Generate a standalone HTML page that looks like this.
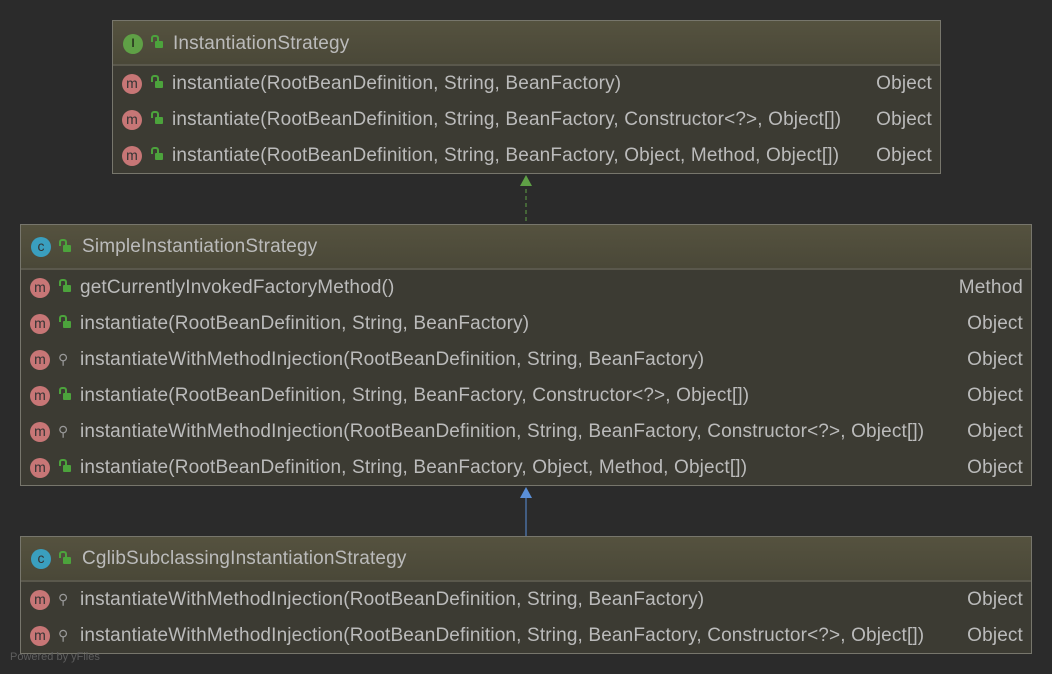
<!DOCTYPE html>
<html><head><style>
body{margin:0;width:1052px;height:674px;background:#2b2b2b;font-family:"Liberation Sans",sans-serif;position:relative;overflow:hidden}
.box{position:absolute;border:1px solid #77766c;background:#3c3b33}
.hd{position:absolute;left:0;right:0;top:0;height:43px;background:linear-gradient(#55523f,#4a4838);border-bottom:2px solid #5a584c}
.t{position:absolute;color:#bbbbbb;font-size:19px;letter-spacing:0.15px;white-space:nowrap;line-height:22px;margin-top:0px}
.r{position:absolute;color:#bbbbbb;font-size:19px;letter-spacing:0.15px;right:8px;line-height:22px}
.ic{position:absolute;width:20px;height:20px;border-radius:50%;font-size:14px;text-align:center;line-height:19px;color:#333}
.m{background:#c77676}
.c{background:#3a9fbf}
.i{background:#5fa046;color:#2b3a20;font-weight:bold;font-size:12px}
.lk{position:absolute;width:8px;height:7px;background:#4ca33c;border-radius:1px}
.lk:before{content:"";position:absolute;left:-4px;top:-6px;width:4px;height:5px;border:2px solid #4ca33c;border-bottom:none;border-radius:3px 3px 0 0}
.key{position:absolute;color:#999;font-size:14px}
</style></head><body>

<div class="box" style="left:112px;top:20px;width:827px;height:152px">
 <div class="hd"></div>
 <div class="ic i" style="left:10px;top:13px">I</div><div class="lk" style="left:42px;top:20px"></div>
 <div class="t" style="left:60px;top:12px">InstantiationStrategy</div>
 <div class="ic m" style="left:9px;top:53px">m</div><div class="lk" style="left:42px;top:60px"></div>
 <div class="t" style="left:59px;top:52px">instantiate(RootBeanDefinition, String, BeanFactory)</div><div class="r" style="top:52px">Object</div>
 <div class="ic m" style="left:9px;top:89px">m</div><div class="lk" style="left:42px;top:96px"></div>
 <div class="t" style="left:59px;top:88px">instantiate(RootBeanDefinition, String, BeanFactory, Constructor&lt;?&gt;, Object[])</div><div class="r" style="top:88px">Object</div>
 <div class="ic m" style="left:9px;top:125px">m</div><div class="lk" style="left:42px;top:132px"></div>
 <div class="t" style="left:59px;top:124px">instantiate(RootBeanDefinition, String, BeanFactory, Object, Method, Object[])</div><div class="r" style="top:124px">Object</div>
</div>

<svg style="position:absolute;left:515px;top:172px" width="22" height="54"><line x1="11" y1="10" x2="11" y2="52" stroke="#5fa046" stroke-dasharray="4,3"/><polygon points="5,14 11,3 17,14" fill="#5fa046"/></svg>

<div class="box" style="left:20px;top:224px;width:1010px;height:260px">
 <div class="hd"></div>
 <div class="ic c" style="left:10px;top:12px">c</div><div class="lk" style="left:42px;top:20px"></div>
 <div class="t" style="left:61px;top:11px">SimpleInstantiationStrategy</div>
 <div class="ic m" style="left:9px;top:53px">m</div><div class="lk" style="left:42px;top:60px"></div>
 <div class="t" style="left:59px;top:52px">getCurrentlyInvokedFactoryMethod()</div><div class="r" style="top:52px">Method</div>
 <div class="ic m" style="left:9px;top:89px">m</div><div class="lk" style="left:42px;top:96px"></div>
 <div class="t" style="left:59px;top:88px">instantiate(RootBeanDefinition, String, BeanFactory)</div><div class="r" style="top:88px">Object</div>
 <div class="ic m" style="left:9px;top:125px">m</div><div class="key" style="left:37px;top:126px">⚲</div>
 <div class="t" style="left:59px;top:124px">instantiateWithMethodInjection(RootBeanDefinition, String, BeanFactory)</div><div class="r" style="top:124px">Object</div>
 <div class="ic m" style="left:9px;top:161px">m</div><div class="lk" style="left:42px;top:168px"></div>
 <div class="t" style="left:59px;top:160px">instantiate(RootBeanDefinition, String, BeanFactory, Constructor&lt;?&gt;, Object[])</div><div class="r" style="top:160px">Object</div>
 <div class="ic m" style="left:9px;top:197px">m</div><div class="key" style="left:37px;top:198px">⚲</div>
 <div class="t" style="left:59px;top:196px">instantiateWithMethodInjection(RootBeanDefinition, String, BeanFactory, Constructor&lt;?&gt;, Object[])</div><div class="r" style="top:196px">Object</div>
 <div class="ic m" style="left:9px;top:233px">m</div><div class="lk" style="left:42px;top:240px"></div>
 <div class="t" style="left:59px;top:232px">instantiate(RootBeanDefinition, String, BeanFactory, Object, Method, Object[])</div><div class="r" style="top:232px">Object</div>
</div>

<svg style="position:absolute;left:515px;top:484px" width="22" height="54"><line x1="11" y1="10" x2="11" y2="52" stroke="#5a8fd8"/><polygon points="5,14 11,3 17,14" fill="#5a8fd8"/></svg>

<div class="box" style="left:20px;top:536px;width:1010px;height:116px">
 <div class="hd"></div>
 <div class="ic c" style="left:10px;top:12px">c</div><div class="lk" style="left:42px;top:20px"></div>
 <div class="t" style="left:61px;top:11px">CglibSubclassingInstantiationStrategy</div>
 <div class="ic m" style="left:9px;top:53px">m</div><div class="key" style="left:37px;top:54px">⚲</div>
 <div class="t" style="left:59px;top:52px">instantiateWithMethodInjection(RootBeanDefinition, String, BeanFactory)</div><div class="r" style="top:52px">Object</div>
 <div class="ic m" style="left:9px;top:89px">m</div><div class="key" style="left:37px;top:90px">⚲</div>
 <div class="t" style="left:59px;top:88px">instantiateWithMethodInjection(RootBeanDefinition, String, BeanFactory, Constructor&lt;?&gt;, Object[])</div><div class="r" style="top:88px">Object</div>
</div>

<div style="position:absolute;left:10px;top:651px;font-size:11px;color:#5e5e5e">Powered by yFiles</div>
</body></html>
